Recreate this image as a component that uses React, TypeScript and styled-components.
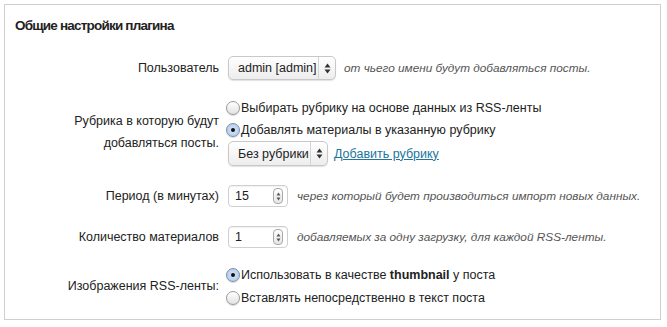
import styled, { createGlobalStyle } from 'styled-components';

const GlobalStyle = createGlobalStyle`
  body {
    margin: 0;
    background: #fff;
    font-family: "Liberation Sans", Arial, sans-serif;
    color: #222;
  }
`;

const Panel = styled.section`
  margin: 4px 0 0 4px;
  width: 655px;
  height: 314px;
  border: 1px solid #cfcfcf;
  background: #fff;
`;

const Title = styled.h3`
  margin: 0;
  padding: 12px 10px 0;
  font-size: 13.5px;
  line-height: 18px;
  letter-spacing: -0.8px;
  font-weight: bold;
  color: #222;
`;

const Row = styled.div<{ $top: number }>`
  display: grid;
  grid-template-columns: 214px 1fr;
  column-gap: 9px;
  align-items: center;
  margin-top: ${(p) => p.$top}px;
`;

const Label = styled.div`
  text-align: right;
  font-size: 12.5px;
  line-height: 22px;
  color: #222;
`;

const Controls = styled.div`
  display: flex;
  flex-direction: column;
`;

const Inline = styled.div<{ $gap: number }>`
  display: flex;
  align-items: center;
  gap: ${(p) => p.$gap}px;
`;

const Hint = styled.span`
  font-size: 11.8px;
  font-style: italic;
  color: #555;
  white-space: nowrap;
`;

const SelectBox = styled.div<{ $width: number; $height: number }>`
  display: flex;
  align-items: stretch;
  width: ${(p) => p.$width}px;
  height: ${(p) => p.$height}px;
  box-sizing: border-box;
  border: 1px solid #c8c8c8;
  border-radius: 5px;
  background: linear-gradient(#ffffff, #ededed);
  box-shadow: 0 1px 1px rgba(0, 0, 0, 0.12);
  font-size: 12.5px;
  color: #222;
`;

const SelectValue = styled.span`
  flex: 1;
  display: flex;
  align-items: center;
  padding-left: 9px;
  white-space: nowrap;
`;

const SelectArrows = styled.span`
  width: 16px;
  display: flex;
  align-items: center;
  justify-content: center;
  border-left: 1px solid #d4d4d4;
`;

const NumberBox = styled.div`
  display: flex;
  align-items: center;
  justify-content: space-between;
  width: 60px;
  height: 22px;
  box-sizing: border-box;
  border: 1px solid #d0d0d0;
  border-radius: 4px;
  padding: 0 4px 0 6px;
  background: #fff;
  box-shadow: inset 0 1px 1px rgba(0, 0, 0, 0.06);
  font-size: 12.5px;
  color: #222;
`;

const Spinner = styled.span`
  width: 8px;
  height: 14px;
  border: 1px solid #a8a8a8;
  border-radius: 4px;
  background: linear-gradient(#fff, #e6e6e6);
  display: flex;
  align-items: center;
  justify-content: center;
`;

const RadioLine = styled.label<{ $height: number }>`
  display: flex;
  align-items: center;
  height: ${(p) => p.$height}px;
  margin-left: -2px;
  font-size: 12.5px;
  color: #222;
  white-space: nowrap;
`;

const RadioDot = styled.span<{ $checked?: boolean }>`
  width: 14px;
  height: 14px;
  box-sizing: border-box;
  border-radius: 50%;
  border: 1px solid ${(p) => (p.$checked ? '#7a8fa8' : '#9a9a9a')};
  background: ${(p) =>
    p.$checked ? 'radial-gradient(circle, #d6e6f8 0%, #a9c7ec 100%)' : 'linear-gradient(#ffffff, #e2e2e2)'};
  box-shadow: 0 1px 1px rgba(0, 0, 0, 0.15);
  margin-right: 1px;
  display: flex;
  align-items: center;
  justify-content: center;

  &::after {
    content: '';
    width: 4px;
    height: 4px;
    border-radius: 50%;
    background: #111;
    display: ${(p) => (p.$checked ? 'block' : 'none')};
  }
`;

const Link = styled.a`
  font-size: 12.5px;
  color: #21759b;
  text-decoration: underline;
  cursor: pointer;
`;

function Arrows() {
  return (
    <svg width="7" height="11" viewBox="0 0 7 11">
      <path d="M3.5 0.5 L6.5 4.5 L0.5 4.5 Z" fill="#333" />
      <path d="M3.5 10.5 L6.5 6.5 L0.5 6.5 Z" fill="#333" />
    </svg>
  );
}

function Select({ value, width, height }: { value: string; width: number; height: number }) {
  return (
    <SelectBox $width={width} $height={height}>
      <SelectValue>{value}</SelectValue>
      <SelectArrows>
        <Arrows />
      </SelectArrows>
    </SelectBox>
  );
}

function NumberInput({ value }: { value: number }) {
  return (
    <NumberBox>
      <span>{value}</span>
      <Spinner>
        <svg width="5" height="9" viewBox="0 0 5 9">
          <path d="M2.5 0.5 L4.5 3.5 L0.5 3.5 Z" fill="#555" />
          <path d="M2.5 8.5 L4.5 5.5 L0.5 5.5 Z" fill="#555" />
        </svg>
      </Spinner>
    </NumberBox>
  );
}

function Radio({ checked, height = 22, children }: { checked?: boolean; height?: number; children: React.ReactNode }) {
  return (
    <RadioLine $height={height}>
      <RadioDot $checked={checked} />
      <span>{children}</span>
    </RadioLine>
  );
}

export default function App() {
  return (
    <>
      <GlobalStyle />
      <Panel>
        <Title>Общие настройки плагина</Title>

        <Row $top={21}>
          <Label>Пользователь</Label>
          <Inline $gap={8}>
            <Select value="admin [admin]" width={108} height={24} />
            <Hint>от чьего имени будут добавляться посты.</Hint>
          </Inline>
        </Row>

        <Row $top={17}>
          <Label>
            Рубрика в которую будут
            <br />
            добавляться посты.
          </Label>
          <Controls>
            <Radio>Выбирать рубрику на основе данных из RSS-ленты</Radio>
            <Radio checked>Добавлять материалы в указанную рубрику</Radio>
            <Inline $gap={6}>
              <Select value="Без рубрики" width={100} height={25} />
              <Link>Добавить рубрику</Link>
            </Inline>
          </Controls>
        </Row>

        <Row $top={19}>
          <Label>Период (в минутах)</Label>
          <Inline $gap={9}>
            <NumberInput value={15} />
            <Hint>через который будет производиться импорт новых данных.</Hint>
          </Inline>
        </Row>

        <Row $top={19}>
          <Label>Количество материалов</Label>
          <Inline $gap={9}>
            <NumberInput value={1} />
            <Hint>добавляемых за одну загрузку, для каждой RSS-ленты.</Hint>
          </Inline>
        </Row>

        <Row $top={15}>
          <Label>Изображения RSS-ленты:</Label>
          <Controls>
            <Radio checked height={23}>
              Использовать в качестве <b>thumbnail</b> у поста
            </Radio>
            <Radio height={23}>Вставлять непосредственно в текст поста</Radio>
          </Controls>
        </Row>
      </Panel>
    </>
  );
}
